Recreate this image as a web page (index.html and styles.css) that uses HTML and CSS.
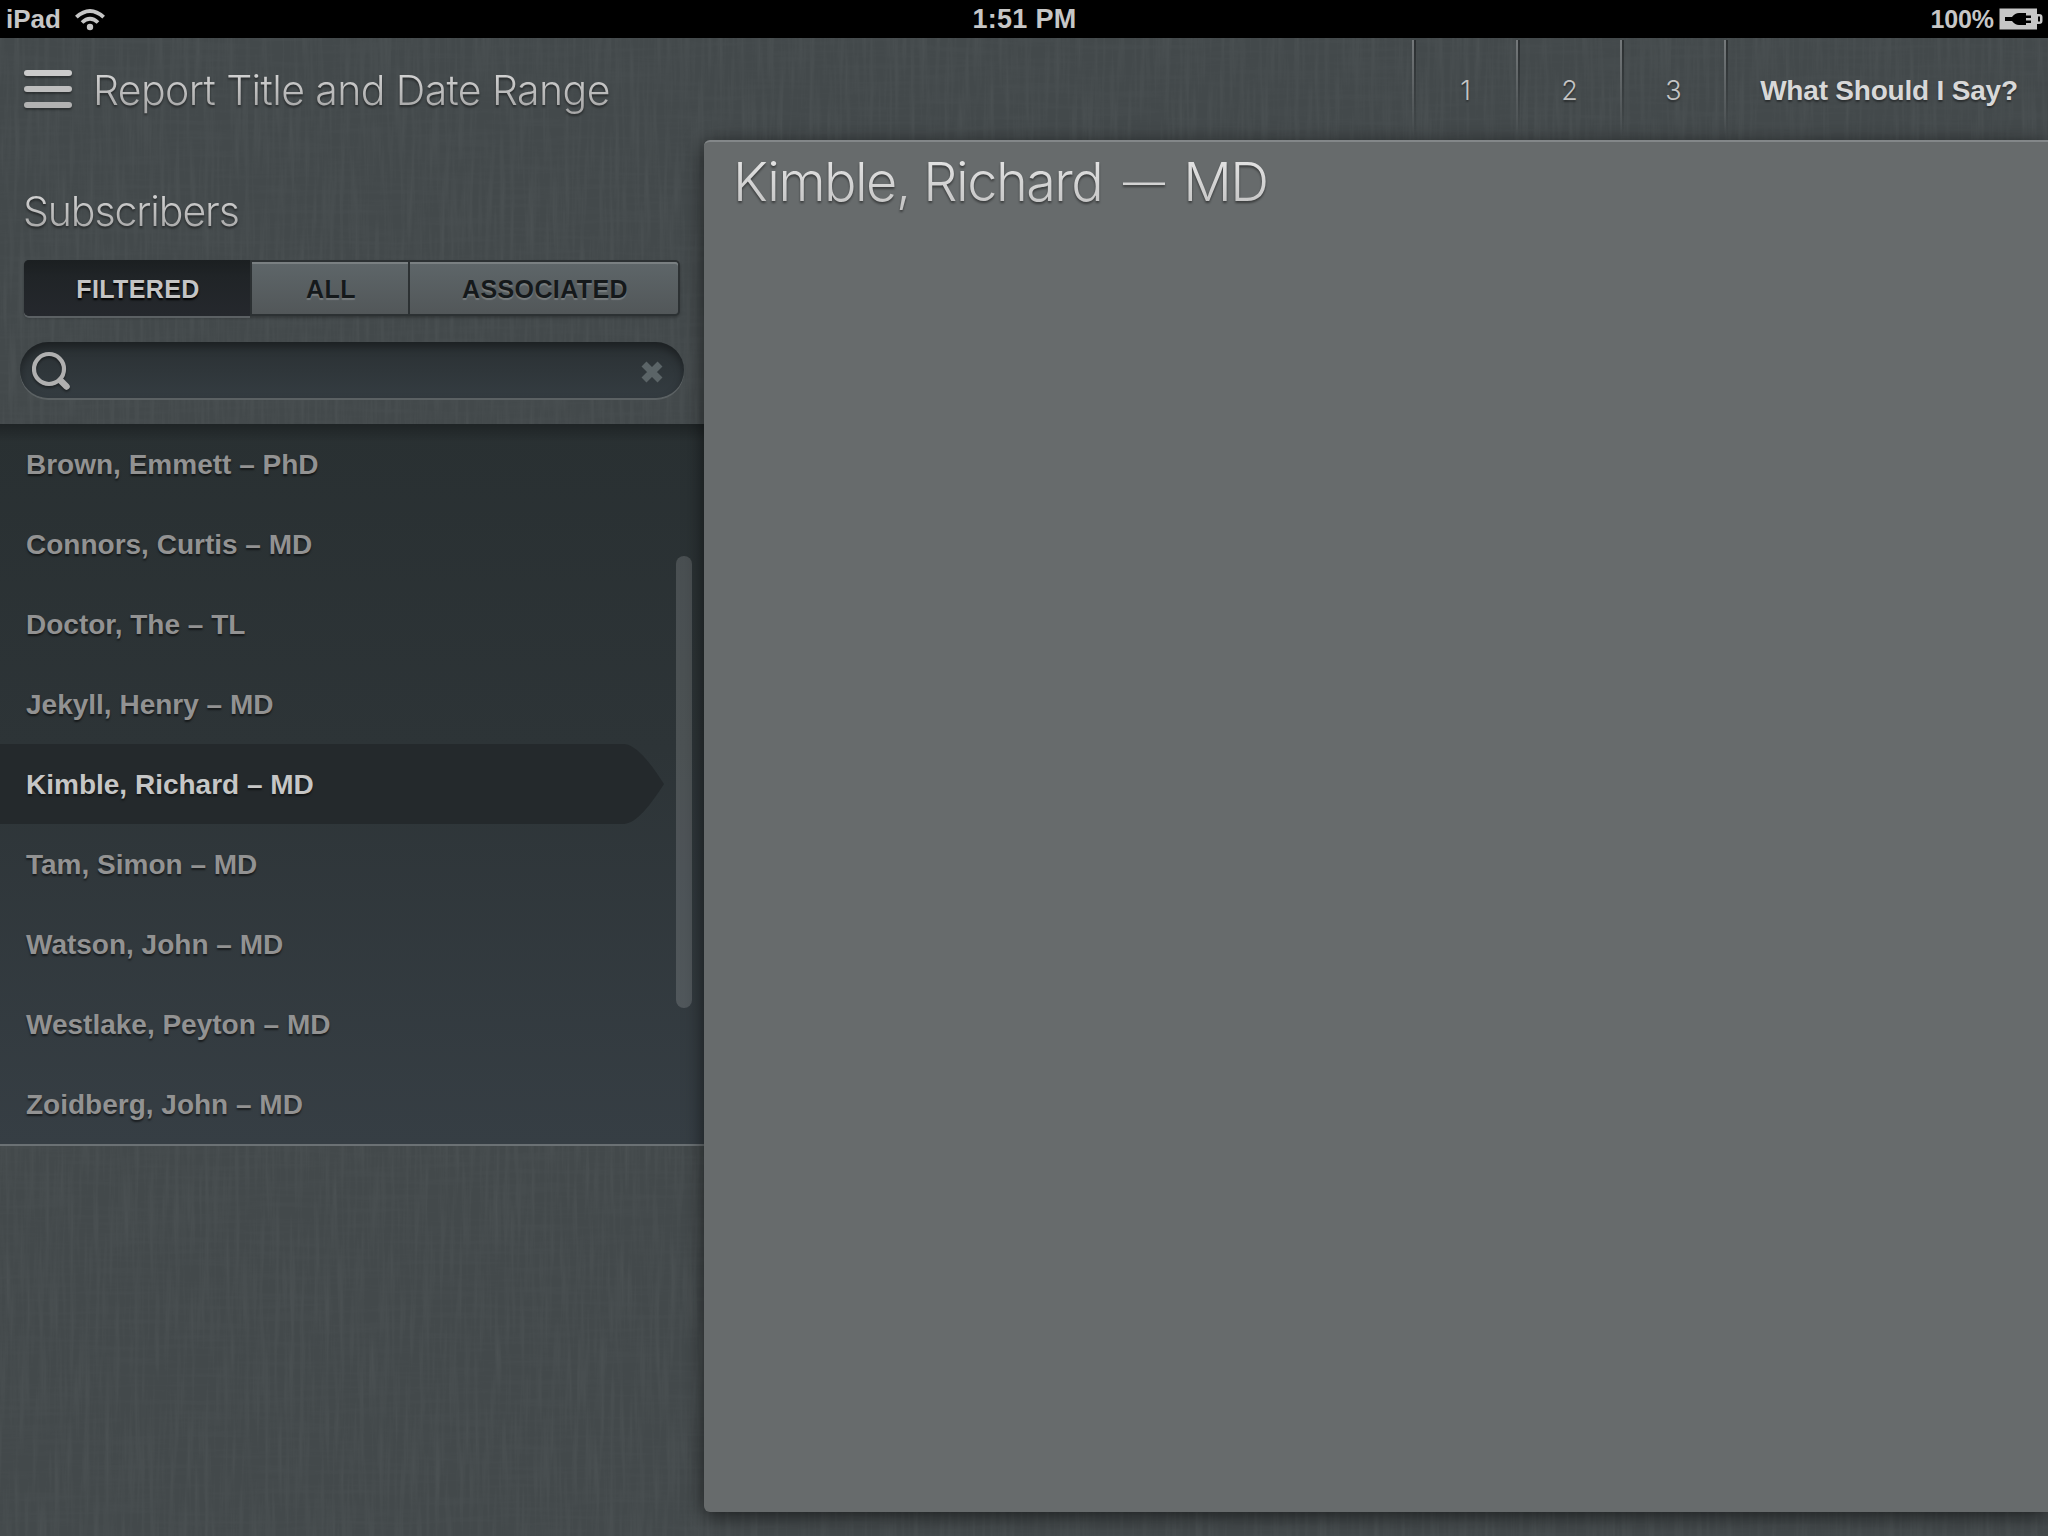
FILE: index.html
```html
<!DOCTYPE html>
<html lang="en">
<head>
<meta charset="utf-8">
<title>Report Title and Date Range</title>
<link rel="stylesheet" href="styles.css">
</head>
<body>
<svg class="linen" width="2048" height="1536" aria-hidden="true">
  <filter id="warp" x="0" y="0" width="100%" height="100%">
    <feTurbulence type="fractalNoise" baseFrequency="0.2 0.012" numOctaves="3" seed="4"/>
    <feColorMatrix values="0 0 0 0 0.42  0 0 0 0 0.45  0 0 0 0 0.45  1.2 0 0 0 -0.5"/>
  </filter>
  <filter id="weft" x="0" y="0" width="100%" height="100%">
    <feTurbulence type="fractalNoise" baseFrequency="0.012 0.2" numOctaves="3" seed="9"/>
    <feColorMatrix values="0 0 0 0 0.16  0 0 0 0 0.18  0 0 0 0 0.19  1.2 0 0 0 -0.5"/>
  </filter>
  <rect width="2048" height="1536" filter="url(#warp)"/>
  <rect width="2048" height="1536" filter="url(#weft)"/>
</svg>
<div class="screen">
  <header class="status">
    <div class="status-left">
      <span class="device">iPad</span>
      <svg class="wifi" width="32" height="23" viewBox="0 0 34 24">
        <path d="M2.500 9.500 Q17 -3.500 31.500 9.500" fill="none" stroke="#c6c6c6" stroke-width="4.200"/>
        <path d="M8.500 15.200 Q17 7 25.500 15.200" fill="none" stroke="#c6c6c6" stroke-width="4"/>
        <circle cx="17" cy="20" r="3.400" fill="#c6c6c6"/>
      </svg>
    </div>
    <span class="clock">1:51 PM</span>
    <div class="status-right">
      <span class="percent">100%</span>
      <svg width="44" height="22" viewBox="0 0 44 22">
        <path d="M0.500 0.500H38V6H40Q43.500 6 43.500 9V13Q43.500 16 40 16H38V21.500H0.500Z" fill="#c6c6c6"/>
        <path d="M39 8.500H41V13.500H39Z" fill="#000"/>
        <path d="M6 9H13Q16 5 20 5H27V7.500H32V10H27V12.500H32V15H27V17H20Q16 17 13 13H6Z" fill="#000"/>
      </svg>
    </div>
  </header>
  <nav class="toolbar">
    <div class="menu"><i></i><i></i><i></i></div>
    <h1 class="thin title">Report Title and Date Range</h1>
    <div class="steps">
      <a class="step">1</a><a class="step">2</a><a class="step">3</a>
      <a class="step say">What Should I Say?</a>
    </div>
  </nav>
  <main class="content">
    <aside class="sidebar">
      <h2 class="thin subhead">Subscribers</h2>
      <div class="segments">
        <span class="seg on">FILTERED</span>
        <span class="seg all">ALL</span>
        <span class="seg assoc">ASSOCIATED</span>
      </div>
      <div class="search">
        <svg class="glass" width="42" height="42" viewBox="0 0 42 42">
          <circle cx="17" cy="18" r="15" fill="none" stroke="#b0b0b0" stroke-width="4.200"/>
          <path d="M28.500 29.500L34.500 35.500" stroke="#b0b0b0" stroke-width="6.500" stroke-linecap="round"/>
        </svg>
        <svg width="22" height="22" viewBox="0 0 22 22">
          <path d="M3 3L19 19M19 3L3 19" stroke="#5b6467" stroke-width="7"/>
        </svg>
      </div>
      <ul class="list">
        <li>Brown, Emmett – PhD</li>
        <li>Connors, Curtis – MD</li>
        <li>Doctor, The – TL</li>
        <li>Jekyll, Henry – MD</li>
        <li class="current">
          <svg class="marker" width="664" height="80" viewBox="0 0 664 80"><path d="M0 0H624C637 1 651 20 664 40C651 60 637 79 624 80H0Z" fill="#24292c"/></svg>
          <span>Kimble, Richard – MD</span>
        </li>
        <li>Tam, Simon – MD</li>
        <li>Watson, John – MD</li>
        <li>Westlake, Peyton – MD</li>
        <li>Zoidberg, John – MD</li>
        <li class="scrollbar" aria-hidden="true"></li>
      </ul>
    </aside>
    <section class="panel">
      <h2 class="thin name">Kimble, Richard <span class="dash">—</span> MD</h2>
    </section>
  </main>
</div>
</body>
</html>
```
FILE: styles.css
```css
* { box-sizing: border-box; }

body {
  margin: 0;
  width: 2048px;
  height: 1536px;
  overflow: hidden;
  background: #43494b;
  font-family: "Liberation Sans", Arial, sans-serif;
}

h1, h2, ul { margin: 0; padding: 0; }

.linen { position: absolute; inset: 0; opacity: 0.13; }

.screen {
  position: relative;
  display: flex;
  flex-direction: column;
  height: 1536px;
}

.status {
  display: grid;
  grid-template-columns: 1fr auto 1fr;
  align-items: center;
  height: 38px;
  padding: 0 5px 0 6px;
  background: #000;
  color: #c6c6c6;
  font-size: 27px;
  font-weight: 700;
  line-height: 38px;
}
.status-left { display: flex; align-items: center; gap: 13px; }
.status-right { display: flex; align-items: center; justify-content: flex-end; gap: 5px; }
.device { font-size: 26px; }
.clock { letter-spacing: 0.3px; }
.percent { font-size: 25px; letter-spacing: -0.1px; }

.thin {
  font-family: Inter, "Liberation Sans", sans-serif;
  font-weight: 300;
  white-space: nowrap;
  color: transparent;
  background: linear-gradient(#d2d2d2 20%, #a8a8a8 85%);
  background-clip: text;
  -webkit-background-clip: text;
  filter: drop-shadow(0 2px 1px rgba(0, 0, 0, 0.45));
}

.toolbar {
  display: flex;
  align-items: center;
  height: 102px;
  padding-left: 24px;
}
.menu {
  display: flex;
  flex-direction: column;
  gap: 10px;
  width: 48px;
  margin-right: 21px;
}
.menu i {
  height: 6px;
  border-radius: 3px;
  background: #bebebe;
  box-shadow: 0 2px 2px rgba(0, 0, 0, 0.35);
}
.menu i:first-child { background: #cbcbcb; }
.menu i:last-child { background: #b2b2b2; }

.title { font-size: 41px; line-height: 52px; letter-spacing: -0.6px; padding-top: 1px; }

.steps { display: flex; margin-left: auto; height: 98px; align-self: flex-start; padding-top: 2px; }
.step {
  display: flex;
  align-items: center;
  justify-content: center;
  width: 104px;
  padding: 5px 0 0 3px;
  font: 300 27px Inter, sans-serif;
  color: #c4c4c4;
  text-shadow: 0 2px 2px rgba(0, 0, 0, 0.4);
  background:
    linear-gradient(#75797b, #75797b00) 0 0 / 2px 100% no-repeat,
    linear-gradient(#2b2f31, #2b2f3100) 2px 0 / 2px 100% no-repeat;
}
.say {
  width: 324px;
  padding: 6px 0 0 6px;
  font: 700 28px "Liberation Sans", sans-serif;
  letter-spacing: -0.2px;
  color: #d8d8d8;
}

.content { display: flex; flex: 1; }
.sidebar { width: 704px; padding-top: 45px; }
.subhead { font-size: 41px; line-height: 52px; padding-left: 23px; letter-spacing: -1.1px; }

.segments {
  display: flex;
  gap: 2px;
  width: 656px;
  height: 56px;
  margin: 23px 0 0 24px;
  padding: 2px 2px 2px 0;
  border-radius: 5px;
  background: #2c3133;
  box-shadow: 0 2px 3px rgba(0, 0, 0, 0.25);
}
.seg {
  display: flex;
  align-items: center;
  justify-content: center;
  height: 52px;
  padding: 3px 0 0 2px;
  font-size: 25px;
  font-weight: 700;
  letter-spacing: 0.4px;
  color: #15191b;
  text-shadow: 0 2px 1px rgba(255, 255, 255, 0.2);
  background: linear-gradient(#5e6669, #525759);
  box-shadow: inset 0 2px #7a8082;
}
.on {
  width: 226px;
  height: 56px;
  margin-top: -2px;
  border-radius: 5px 0 0 5px;
  background: linear-gradient(#1b1f21, #202427 30%, #25282d);
  color: #c4c4c4;
  text-shadow: 0 2px 2px #000;
  box-shadow: 0 2px #5b6063;
}
.all { width: 156px; }
.assoc { width: 268px; border-radius: 0 3px 3px 0; }

.search {
  display: flex;
  align-items: center;
  justify-content: space-between;
  width: 664px;
  height: 56px;
  margin: 26px 0 0 20px;
  padding: 3px 21px 0 12px;
  border-radius: 28px;
  background: linear-gradient(#2a3033, #343c41);
  box-shadow: inset 0 5px 8px rgba(0, 0, 0, 0.35), 0 2px #5b6163;
}
.glass { filter: drop-shadow(0 2px 1px rgba(0, 0, 0, 0.4)); }

.list {
  position: relative;
  height: 722px;
  margin-top: 26px;
  list-style: none;
  background:
    linear-gradient(rgba(0, 0, 0, 0.25), rgba(0, 0, 0, 0)) 0 0 / 100% 18px no-repeat,
    linear-gradient(#293032, #2d3437 45%, #363e44);
  border-bottom: 2px solid #6b7174;
}
.list li {
  display: flex;
  align-items: center;
  height: 80px;
  padding: 2px 0 0 26px;
  font-size: 28px;
  font-weight: 700;
  color: #929292;
  text-shadow: 0 2px 2px rgba(0, 0, 0, 0.55);
}
.list .current { position: relative; color: #c6c6c6; }
.current span { position: relative; }
.marker { position: absolute; left: 0; top: 0; }
.list .scrollbar {
  position: absolute;
  left: 676px;
  top: 132px;
  width: 16px;
  height: 452px;
  padding: 0;
  border-radius: 8px;
  background: rgba(255, 255, 255, 0.15);
}

.panel {
  position: relative;
  width: 1344px;
  height: 1372px;
  padding: 5px 0 0 29px;
  border-top: 2px solid #838789;
  border-radius: 6px 0 0 6px;
  background: #676b6c;
  box-shadow: 0 4px 20px rgba(0, 0, 0, 0.6);
}
.name {
  font-size: 54px;
  line-height: 70px;
  letter-spacing: -1.5px;
  background-image: linear-gradient(#e2e2e2 20%, #c4c4c4 85%);
}
.dash {
  padding: 0 6px 0 7px;
  font-size: 42px;
  line-height: 1;
  vertical-align: 4px;
}
```
